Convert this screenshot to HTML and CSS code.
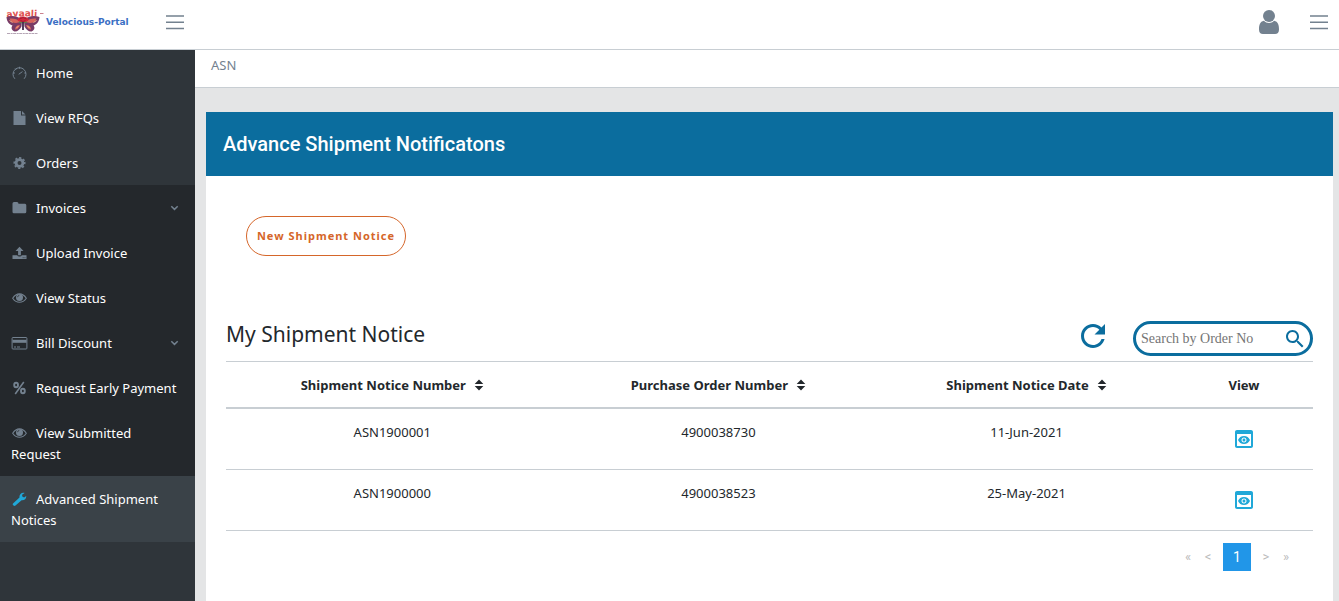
FILE: index.html
```html
<!DOCTYPE html>
<html lang="en">
<head>
<meta charset="utf-8">
<title>Velocious-Portal - ASN</title>
<link rel="stylesheet" href="styles.css">
</head>
<body>
<svg class="defs" aria-hidden="true">
  <symbol id="bars" viewBox="0 0 20 16"><path d="M1 1.9h18M1 8.2h18M1 14.4h18" fill="none" stroke="currentColor" stroke-width="1.5"/></symbol>
  <symbol id="chevron" viewBox="0 0 8 6"><path d="M.8 1.2L4 4.4l3.200-3.200" fill="none" stroke="currentColor" stroke-width="1.500"/></symbol>
  <symbol id="eye" viewBox="0 0 16 14"><path d="M1.200 7.200Q4 2.900 8 2.900t6.800 4.300Q12 11.300 8 11.300T1.200 7.200z" fill="none" stroke="currentColor" stroke-width="1.100"/><circle cx="8" cy="6.600" r="3.500" fill="currentColor"/><path d="M6 6.200a2 2 0 0 1 1.800-1.800" fill="none" stroke="#24282c" stroke-width=".7"/></symbol>
  <symbol id="sort" viewBox="0 0 10 12"><path d="M5 .5L9.300 5H.7zM5 11.500L.7 7h8.600z" fill="currentColor"/></symbol>
  <symbol id="preview" viewBox="0 0 24 24"><path fill="currentColor" d="M19 3H5c-1.110 0-2 .9-2 2v14c0 1.100.89 2 2 2h14c1.100 0 2-.9 2-2V5c0-1.100-.89-2-2-2zm0 16H5V7h14v12zm-5.500-6c0 .83-.67 1.500-1.500 1.500s-1.500-.67-1.500-1.500.67-1.500 1.500-1.500 1.500.67 1.500 1.500zM12 9c-2.730 0-5.060 1.660-6 4 .94 2.340 3.270 4 6 4s5.060-1.660 6-4c-.94-2.340-3.270-4-6-4zm0 6.500c-1.380 0-2.500-1.120-2.500-2.500s1.120-2.500 2.500-2.500 2.500 1.120 2.500 2.500-1.120 2.500-2.500 2.500z"/></symbol>
</svg>

<header class="topbar">
  <a class="brand" href="#" aria-label="Velocious-Portal">
    <svg class="brand-mark" viewBox="0 0 38 28">
      <path id="arch" d="M1 9.500Q17 7.500 37 9" fill="none"/>
      <text class="mark-name"><textPath href="#arch">avaali</textPath></text>
      <path d="M34 5.500h3.500" stroke="#b44a5c" stroke-width=".7"/>
      <g transform="translate(-1.500 -2)">
        <path d="M17.500 14C13 9.500 7 9.500 2 11c.2 4 2.500 7.500 6 8.500-2 2.500-.5 5 2 6 3 .2 5.500-2 7-5z" fill="#783b66"/>
        <path d="M19.500 14C24 9.500 30 9.500 35 11c-.2 4-2.500 7.500-6 8.500 2 2.500.5 5-2 6-3 .2-5.500-2-7-5z" fill="#783b66"/>
        <path d="M16 16c-3-3-7-4-11-3.500 1 3 3.500 4.500 6.500 4.500zM21 16c3-3 7-4 11-3.500-1 3-3.500 4.500-6.500 4.500zM15.500 19c-3 0-5 2-5 4.500 2.500 0 4-2 5-4.500zM21.500 19c3 0 5 2 5 4.500-2.500 0-4-2-5-4.500z" fill="#d8645c"/>
        <path d="M5 14.500l3 2M32 14.500l-3 2M12 22l2-2M25 22l-2-2" stroke="#f0b183"/>
        <ellipse cx="18.500" cy="13.500" rx="5.500" ry="3" fill="#d3283c"/>
        <path d="M15 13q3.500-3 7 0M16 14.500q2.500 2 5 0" fill="none" stroke="#8c1830" stroke-width=".7"/>
        <path d="M14.500 16q4 2 8 0" fill="none" stroke="#5a8b4e"/>
        <path d="M18.500 16v8" stroke="#41274d" stroke-width="1.800"/>
      </g>
      <path d="M1 25.500h31" stroke="#b5a5b5" stroke-width="1" stroke-dasharray="3 .6 2 .5"/>
    </svg>
    <span class="brand-name">Velocious-Portal</span>
  </a>
  <button class="icon-button" type="button" aria-label="Toggle sidebar"><svg class="bars"><use href="#bars"/></svg></button>
  <div class="topbar-right">
    <button class="icon-button" type="button" aria-label="Account">
      <svg class="user" viewBox="0 0 20 24"><circle cx="10" cy="6" r="6" fill="currentColor"/><path d="M4.800 10.800C1 11.500 0 15 0 19.500 0 22.500 1.500 24 4 24h12c2.500 0 4-1.500 4-4.500 0-4.500-1-8-4.800-8.700Q13 13 10 13t-5.200-2.200z" fill="currentColor"/></svg>
    </button>
    <button class="icon-button" type="button" aria-label="Toggle aside menu"><svg class="bars"><use href="#bars"/></svg></button>
  </div>
</header>

<div class="layout">
  <nav class="sidebar" aria-label="Main">
    <a class="nav-link" href="#"><svg class="nav-icon" viewBox="0 0 16 14"><path d="M3.400 12.800A6.500 6.500 0 1 1 12.600 12.800M7.200 8.300L11 5.600M8 .8v2M1.600 7h1.800M3.500 2.700l1.200 1.200M14.400 7h-1.600" fill="none" stroke="currentColor"/></svg>Home</a>
    <a class="nav-link" href="#"><svg class="nav-icon" viewBox="0 0 16 14"><path d="M2 0h7.500v4.500H14V14H2zM10.500 0L14 3.500h-3.500z" fill="currentColor"/></svg>View RFQs</a>
    <a class="nav-link" href="#"><svg class="nav-icon" viewBox="0 0 16 14"><circle cx="8" cy="7" r="3.400" fill="none" stroke="currentColor" stroke-width="2.800"/><circle cx="8" cy="7" r="5.200" fill="none" stroke="currentColor" stroke-width="1.700" stroke-dasharray="2.100 1.984" transform="rotate(-11 8 7)"/></svg>Orders</a>
    <div class="nav-group">
      <a class="nav-link" href="#"><svg class="nav-icon" viewBox="0 0 16 14"><path d="M1 2.500Q1 1 2.500 1h3Q7 1 7 2.800h6.500q1.300 0 1.300 1.500v6.500q0 1.500-1.500 1.500h-11Q1 12.300 1 10.800z" fill="currentColor"/></svg>Invoices<svg class="chevron"><use href="#chevron"/></svg></a>
      <a class="nav-link" href="#"><svg class="nav-icon" viewBox="0 0 16 14"><path d="M8 .8L12 5H9.400v4.300H6.600V5H4zM1 9.300h4.700q.5 1.300 2.300 1.300t2.300-1.300H15V13H1z" fill="currentColor"/><path d="M11.200 11.700h.9M13 11.700h.9" stroke="#24282c" stroke-width=".8"/></svg>Upload Invoice</a>
      <a class="nav-link" href="#"><svg class="nav-icon"><use href="#eye"/></svg>View Status</a>
      <a class="nav-link" href="#"><svg class="nav-icon" viewBox="0 0 16 14"><rect x=".6" y="1.500" width="14.800" height="11.500" rx=".8" fill="none" stroke="currentColor"/><path d="M1 3.800h14v3H1z" fill="currentColor"/><path d="M2.500 11h2M5.500 11h3" stroke="currentColor"/></svg>Bill Discount<svg class="chevron"><use href="#chevron"/></svg></a>
      <a class="nav-link" href="#"><svg class="nav-icon" viewBox="0 0 16 14"><g fill="none" stroke="currentColor" stroke-width="1.900"><ellipse cx="4.600" cy="4" rx="1.900" ry="2.300"/><ellipse cx="11.400" cy="10" rx="1.900" ry="2.300"/><path d="M12.300 1L3.700 13" stroke-width="1.600"/></g></svg>Request Early Payment</a>
      <a class="nav-link" href="#"><svg class="nav-icon"><use href="#eye"/></svg>View Submitted Request</a>
    </div>
    <a class="nav-link active" href="#" aria-current="page"><svg class="nav-icon" viewBox="0 0 16 14"><path d="M1.500 11.500L8 5.400C7.600 2.800 9.600.3 12.500.7l.6.300-2.500 1.700.2 1.900 1.800.8 2.100-1.500c.4 2.500-1.700 4.800-4.600 4.400L4 13.500q-1 .8-2 0l-.5-.5q-.7-.7 0-1.500z" fill="currentColor"/></svg>Advanced Shipment Notices</a>
  </nav>

  <div class="content">
    <nav class="breadcrumb" aria-label="Breadcrumb">ASN</nav>
    <main class="card">
      <h1 class="card-title">Advance Shipment Notificatons</h1>
      <div class="card-body">
        <button class="new-notice" type="button">New Shipment Notice</button>
        <div class="list-head">
          <h2>My Shipment Notice</h2>
          <div class="tools">
            <button class="icon-button refresh" type="button" aria-label="Refresh"><svg viewBox="4 4 16 16"><path fill="currentColor" d="M17.650 6.350C16.200 4.900 14.210 4 12 4c-4.420 0-7.990 3.580-7.990 8s3.570 8 7.990 8c3.730 0 6.840-2.550 7.730-6h-2.080c-.82 2.330-3.040 4-5.650 4-3.310 0-6-2.690-6-6s2.690-6 6-6c1.660 0 3.140.69 4.220 1.780L13 11h7V4l-2.350 2.350z"/></svg></button>
            <form class="search" role="search">
              <input type="text" placeholder="Search by Order No" aria-label="Search by Order No">
              <button class="icon-button" type="button" aria-label="Search"><svg viewBox="3 3 18 18"><path fill="currentColor" d="M15.500 14h-.79l-.28-.27C15.410 12.590 16 11.110 16 9.500 16 5.910 13.090 3 9.500 3S3 5.910 3 9.500 5.910 16 9.500 16c1.610 0 3.090-.59 4.230-1.570l.27.28v.79l5 4.990L20.490 19l-4.990-5zm-6 0C7.010 14 5 11.990 5 9.500S7.010 5 9.500 5 14 7.010 14 9.500 11.990 14 9.500 14z"/></svg></button>
            </form>
          </div>
        </div>
        <table class="notices">
          <colgroup><col class="col-notice"><col class="col-order"><col class="col-date"><col class="col-view"></colgroup>
          <thead>
            <tr>
              <th scope="col">Shipment Notice Number<svg class="sort"><use href="#sort"/></svg></th>
              <th scope="col">Purchase Order Number<svg class="sort"><use href="#sort"/></svg></th>
              <th scope="col">Shipment Notice Date<svg class="sort"><use href="#sort"/></svg></th>
              <th scope="col">View</th>
            </tr>
          </thead>
          <tbody>
            <tr><td>ASN1900001</td><td>4900038730</td><td>11-Jun-2021</td><td><a class="view" href="#" aria-label="View ASN1900001"><svg><use href="#preview"/></svg></a></td></tr>
            <tr><td>ASN1900000</td><td>4900038523</td><td>25-May-2021</td><td><a class="view" href="#" aria-label="View ASN1900000"><svg><use href="#preview"/></svg></a></td></tr>
          </tbody>
        </table>
        <nav class="pager" aria-label="Pages">
          <a href="#">«</a><a href="#">&lt;</a><a class="current" href="#" aria-current="page">1</a><a href="#">&gt;</a><a href="#">»</a>
        </nav>
      </div>
    </main>
  </div>
</div>
</body>
</html>
```
FILE: styles.css
```css
* { box-sizing: border-box; }

body {
  margin: 0;
  min-height: 100vh;
  display: flex;
  flex-direction: column;
  background: #e4e5e6;
  color: #23282c;
  font: 13px/21px "Noto Sans", "Open Sans", sans-serif;
}

a { color: inherit; text-decoration: none; }
.defs { display: none; }

.icon-button {
  display: flex;
  padding: 0;
  border: 0;
  background: none;
  color: #73818f;
  cursor: pointer;
}

.topbar {
  display: flex;
  align-items: center;
  height: 50px;
  padding: 0 10px 5px 6px;
  border-bottom: 1px solid #c8ced3;
  background: #fff;
}

.brand {
  display: flex;
  align-items: center;
  gap: 2px;
  width: 159px;
}
.brand-mark { width: 38px; height: 28px; overflow: visible; }
.mark-name { font: bold 9px "DejaVu Sans", sans-serif; fill: #e0524f; }
.brand-name { color: #3b6fc4; font: bold 9px/12px "DejaVu Sans", sans-serif; }
.bars { width: 20px; height: 16px; }
.user { width: 20px; height: 24px; }
.topbar-right {
  display: flex;
  align-items: center;
  gap: 30px;
  margin-left: auto;
}

.layout { display: flex; flex: 1; }

.sidebar {
  flex: none;
  width: 195px;
  background: #2f353a;
  color: #fff;
}
.nav-link { display: block; position: relative; padding: 13px 11px 11px; }
.nav-group { background: #24282c; }
.nav-icon {
  width: 17px;
  height: 14px;
  margin-right: 8px;
  color: #73818f;
  vertical-align: -2px;
}
.active { background: #3a4248; }
.active .nav-icon { color: #20a8d8; }
.chevron {
  position: absolute;
  top: 20px;
  right: 16px;
  width: 9px;
  height: 6px;
  color: #73818f;
}

.content {
  display: flex;
  flex: 1;
  flex-direction: column;
  min-width: 0;
}
.breadcrumb {
  height: 38px;
  padding: 5px 16px;
  border-bottom: 1px solid #c8ced3;
  background: #fff;
  color: #73818f;
}
.card {
  flex: 1;
  margin: 24px 6px 0 11px;
  background: #fff;
}
.card-title {
  margin: 0;
  padding: 20px 17px;
  background: #0b6d9e;
  color: #fff;
  font: 500 20px/24px Roboto, sans-serif;
}
.card-body { padding: 40px 20px 0; }

.new-notice {
  display: block;
  height: 40px;
  margin-left: 20px;
  padding: 0 8px;
  border: 1px solid #d5662a;
  border-radius: 20px;
  background: #fff;
  color: #d5662a;
  font: bold 11px/20px "Noto Sans", "Open Sans", sans-serif;
  letter-spacing: 1px;
  min-width: 160px;
  cursor: pointer;
}

.list-head {
  display: flex;
  align-items: flex-end;
  justify-content: space-between;
  margin-top: 64px;
  padding-bottom: 5px;
}
.list-head h2 {
  margin: 0 0 8px;
  font-size: 21px;
  font-weight: 400;
  line-height: 28px;
}
.tools { display: flex; align-items: center; gap: 28px; }
.refresh { color: #0b6d9e; }
.refresh svg { width: 24px; height: 24px; margin-bottom: 5px; }
.search {
  display: flex;
  align-items: center;
  width: 180px;
  height: 35px;
  padding: 0 6px 0 5px;
  border: 3px solid #0b6d9e;
  border-radius: 18px;
}
.search input {
  flex: 1;
  min-width: 0;
  padding: 0;
  border: 0;
  outline: 0;
  background: none;
  color: #23282c;
  font: 14px/20px "Liberation Serif", serif;
}
.search input::placeholder { color: #757575; }
.search .icon-button { color: #0b6d9e; }
.search svg { width: 18px; height: 18px; }

.notices {
  width: 100%;
  table-layout: fixed;
  border-collapse: separate;
  border-spacing: 0;
  text-align: center;
}
.col-notice { width: 30.6%; }
.col-order { width: 29.4%; }
.col-date { width: 27.3%; }
.col-view { width: 12.7%; }
.notices th {
  height: 48px;
  padding: 1px 0 0;
  border-top: 1px solid #c8ced3;
  border-bottom: 2px solid #c8ced3;
  font-weight: 700;
}
.notices td {
  height: 61px;
  padding: 13px 0 0;
  border-bottom: 1px solid #c8ced3;
  vertical-align: top;
}
.sort { width: 10px; height: 12px; margin-left: 8px; vertical-align: -1px; }
.view { display: inline-flex; padding-top: 5px; color: #20a8d8; }
.view svg { width: 24px; height: 24px; }

.pager {
  display: flex;
  justify-content: flex-end;
  gap: 6px;
  padding: 12px 20px 20px 0;
  color: #bbb;
  font: 13px/28px Roboto, sans-serif;
}
.pager a { min-width: 14px; text-align: center; }
.pager .current {
  width: 28px;
  margin: 0 2px;
  background: #2196e8;
  color: #fff;
  font-size: 14px;
}
```
